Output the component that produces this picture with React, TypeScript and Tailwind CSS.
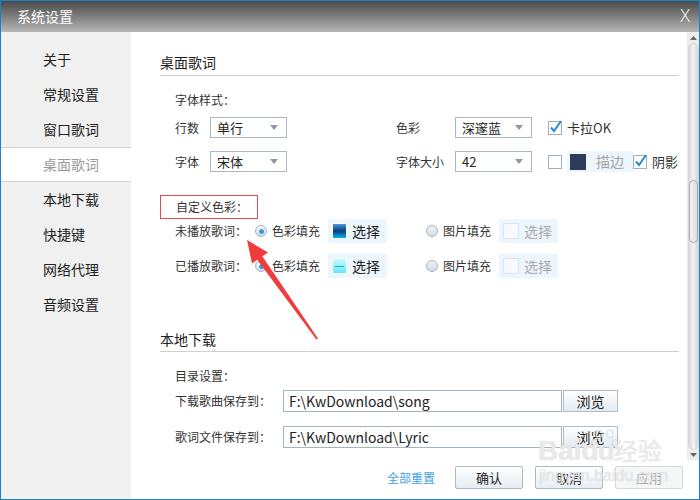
import React from "react";

const menu = ["关于", "常规设置", "窗口歌词", "桌面歌词", "本地下载", "快捷键", "网络代理", "音频设置"];

const Select = ({ value }: { value: string }) => (
    <div className="w-[77px] h-[21px] border border-[#aab7c4] bg-white flex items-center justify-between pl-[6px] pr-[8px] text-[13px] leading-[19px] text-[#222]">
        <span>{value}</span>
        <svg width="8" height="5" viewBox="0 0 8 5">
            <path d="M0 0h8L4 5z" fill="#8b99a8" />
        </svg>
    </div>
);

const Check = ({ on }: { on: boolean }) => (
    <svg width="15" height="15" viewBox="0 0 15 15" className="shrink-0">
        <rect x="0.5" y="1.5" width="13" height="13" fill="#fff" stroke="#9db0c2" />
        {on && <path d="M3 7.5l3 3.5 7-10" fill="none" stroke="#2d8ad2" strokeWidth="2" />}
    </svg>
);

const Radio = ({ on }: { on: boolean }) => (
    <div className="w-[12px] h-[12px] rounded-full border border-[#a9b5c1] bg-linear-to-b from-[#f4f6f8] to-[#cfdbe6] flex items-center justify-center shrink-0">
        {on && <div className="w-[6px] h-[6px] rounded-full bg-white flex items-center justify-center"><div className="w-[5px] h-[5px] rounded-full bg-[#3a98e0]" /></div>}
    </div>
);

const Swatch = ({ kind }: { kind: "dark" | "light" | "none" }) => (
    <div className="w-[59px] h-[24px] bg-[#eef6fd] flex items-center pl-[4px]">
        {kind === "dark" && (
            <div className="w-[15px] h-[16px] border border-white bg-linear-to-b from-[#4a9ae0] via-[#0a3f80] to-[#00b8e8]" />
        )}
        {kind === "light" && (
            <div className="w-[15px] h-[16px] border border-white bg-linear-to-b from-[#c4fbff] to-[#5de8f8] flex items-center justify-center">
                <div className="w-[9px] h-[1px] bg-[#2aa8d8]" />
            </div>
        )}
        {kind === "none" && <div className="w-[16px] h-[16px] border border-[#d8e6f2] bg-[#f6fafe]" />}
        <span className={`ml-[5px] text-[14px] leading-[20px] ${kind === "none" ? "text-[#a9a9a9]" : "text-[#222]"}`}>选择</span>
    </div>
);

const ColorRow = ({ label, kind }: { label: string; kind: "dark" | "light" }) => (
    <div className="flex items-center h-[24px] pl-[15px]">
        <span className="w-[80px]">{label}</span>
        <Radio on />
        <span className="ml-[5px] w-[48px]">色彩填充</span>
        <div className="ml-[8px]"><Swatch kind={kind} /></div>
        <div className="ml-[39px]"><Radio on={false} /></div>
        <span className="ml-[5px] w-[48px]">图片填充</span>
        <div className="ml-[8px]"><Swatch kind="none" /></div>
    </div>
);

const PathRow = ({ label, value }: { label: string; value: string }) => (
    <div className="flex items-center h-[22px] pl-[15px]">
        <span className="w-[108px]">{label}</span>
        <div className="w-[279px] h-[22px] border border-[#a3b4c2] flex items-center pl-[5px] text-[14px] text-[#222]">{value}</div>
        <div className="ml-[1px] w-[55px] h-[22px] border border-[#aebdca] bg-linear-to-b from-white to-[#e3ebf1] flex items-center justify-center text-[14px] text-[#222]">浏览</div>
    </div>
);

const Btn = ({ text, off }: { text: string; off?: boolean }) => (
    <div className={`w-[68px] h-[23px] rounded-[2px] border flex items-center justify-center text-[13px] ${off ? "border-[#d4d9de] bg-[#f5f6f7] text-[#a8a8a8]" : "border-[#abbac7] bg-linear-to-b from-white to-[#e6edf2] text-[#222]"}`}>
        {text}
    </div>
);

export default function App() {
    return (
        <div className="relative w-[700px] h-[500px] overflow-hidden border border-[#1a84c6] bg-white font-['Noto_Sans_CJK_SC','Noto_Sans',sans-serif] text-[12px] text-[#333] flex flex-col">
            <header className="h-[31px] shrink-0 bg-linear-to-b from-[#4b4b4b] to-[#b7b7b7] flex items-center justify-between pl-[16px] pr-[8px] text-white">
                <span className="text-[14px]">系统设置</span>
                <span className="text-[17px] font-['DejaVu_Sans',sans-serif] font-light">X</span>
            </header>
            <div className="flex flex-1 min-h-0">
                <aside className="w-[130px] bg-[#f0f0f0] pt-[10px] text-[14px] text-[#222]">
                    {menu.map((m, i) => (
                        <div
                            key={m}
                            className={`h-[35px] flex items-center pl-[42px] ${i === 3 ? "bg-white border-y border-[#d2d2d2] text-[#9a9a9a]" : ""}`}
                        >
                            {m}
                        </div>
                    ))}
                </aside>
                <div className="flex-1 flex flex-col">
                    <div className="h-[428px] flex">
                        <div className="flex-1 pl-[29px] pr-[8px]">
                            <div className="mt-[20px] h-[24px] border-b border-[#d0d0d0] text-[14px] leading-[20px] text-[#222]">桌面歌词</div>
                            <div className="mt-[14px] h-[20px] leading-[20px] pl-[15px]">字体样式：</div>
                            <div className="mt-[7px] flex items-center pl-[15px]">
                                <span className="w-[35px]">行数</span>
                                <Select value="单行" />
                                <span className="ml-[109px] w-[59px]">色彩</span>
                                <Select value="深邃蓝" />
                                <div className="ml-[16px]"><Check on /></div>
                                <span className="ml-[4px] text-[13px]">卡拉OK</span>
                            </div>
                            <div className="mt-[13px] flex items-center pl-[15px]">
                                <span className="w-[35px]">字体</span>
                                <Select value="宋体" />
                                <span className="ml-[109px] w-[59px]">字体大小</span>
                                <Select value="42" />
                                <div className="ml-[16px]"><Check on={false} /></div>
                                <div className="ml-[4px] w-[66px] h-[21px] bg-[#eef6fd] flex items-center pl-[3px]">
                                    <div className="w-[16px] h-[16px] bg-[#2b3d58]" />
                                    <span className="ml-[10px] text-[14px] text-[#a3a3a3]">描边</span>
                                </div>
                                <Check on />
                                <span className="ml-[4px] text-[13px]">阴影</span>
                            </div>
                            <div className="mt-[23px] w-[98px] h-[24px] border border-[#e8494a] flex items-center pl-[15px]">自定义色彩：</div>
                            <ColorRow label="未播放歌词：" kind="dark" />
                            <div className="mt-[11px]"><ColorRow label="已播放歌词：" kind="light" /></div>
                            <div className="mt-[51px] h-[23px] border-b border-[#d0d0d0] text-[14px] leading-[20px] text-[#222]">本地下载</div>
                            <div className="mt-[14px] h-[20px] leading-[20px] pl-[15px]">目录设置：</div>
                            <div className="mt-[4px]"><PathRow label="下载歌曲保存到：" value="F:\KwDownload\song" /></div>
                            <div className="mt-[14px]"><PathRow label="歌词文件保存到：" value="F:\KwDownload\Lyric" /></div>
                        </div>
                        <div className="w-[12px] bg-[#ececec] flex flex-col items-center pt-[1px]">
                            <svg width="7" height="10" viewBox="0 0 7 10" className="shrink-0">
                                <path d="M0 7h7L3.5 3z" fill="#666" />
                            </svg>
                            <div className="flex-1 w-[11px] rounded-full border border-[#d6d6d6] bg-linear-to-r from-[#dadada] via-[#f3f3f3] to-[#d4d4d4]">
                                <div className="mt-[136px] h-[63px] rounded-[5px] border border-[#a9a9a9] bg-linear-to-r from-[#f4f4f4] to-[#dcdcdc]" />
                            </div>
                            <svg width="7" height="10" viewBox="0 0 7 10" className="shrink-0">
                                <path d="M0 3h7L3.5 7z" fill="#666" />
                            </svg>
                        </div>
                    </div>
                    <div className="flex-1 flex justify-end items-start pt-[6px] pr-[16px] gap-[12px]">
                        <span className="mr-[8px] h-[23px] flex items-center text-[#3ea3e3]">全部重置</span>
                        <Btn text="确认" />
                        <Btn text="取消" />
                        <Btn text="应用" off />
                    </div>
                </div>
            </div>
            <svg className="absolute inset-0 pointer-events-none" width="700" height="500" viewBox="0 0 700 500">
                <polygon
                    points="246,239 267,251.5 261.3,255.2 317,337.6 315.4,338.6 256.2,258.8 251,262.6"
                    fill="#f23b3b"
                />
                <g fill="none" stroke="#d2d2d2" strokeWidth="1.2" opacity="0.7">
                    <ellipse cx="598" cy="433" rx="3" ry="4" />
                    <ellipse cx="609" cy="433" rx="3" ry="4" />
                    <ellipse cx="593" cy="442" rx="2.5" ry="3.5" />
                    <ellipse cx="614" cy="442" rx="2.5" ry="3.5" />
                </g>
            </svg>
            <div className="absolute left-[537px] top-[434px] pointer-events-none text-[28px] leading-[30px] font-['Liberation_Sans',sans-serif] font-bold text-white/60 [text-shadow:0_0_1px_#c8c8c8]">
                Bai<span className="tracking-[-1px]">du</span>
                <span className="font-['Noto_Sans_CJK_SC',sans-serif] font-normal text-[24px]">经验</span>
            </div>
            <div className="absolute left-[538px] top-[465px] pointer-events-none text-[16px] leading-[20px] font-['Liberation_Sans',sans-serif] text-white/60 [text-shadow:0_0_1px_#c0c0c0]">
                jingyan.baidu.com
            </div>
        </div>
    );
}
